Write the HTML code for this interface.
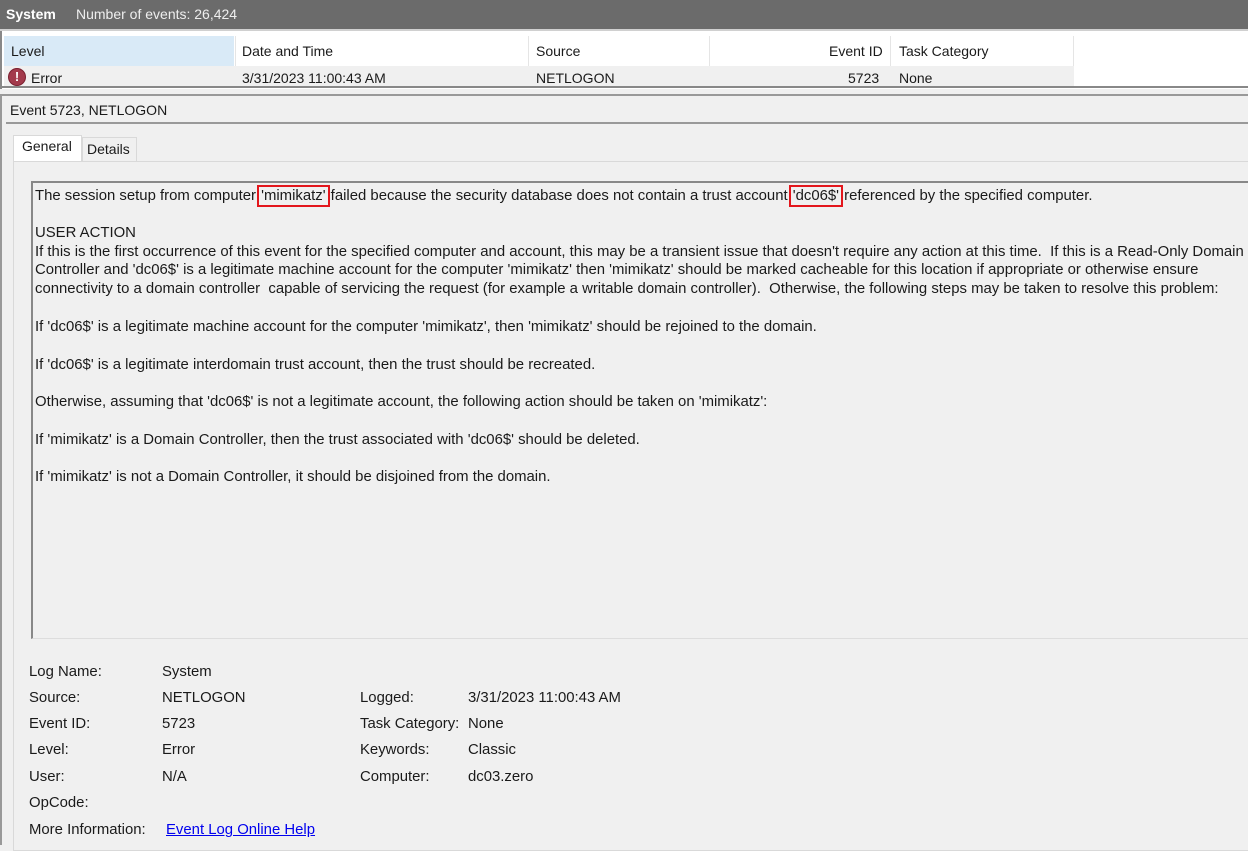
<!DOCTYPE html>
<html><head><meta charset="utf-8"><style>
*{margin:0;padding:0;box-sizing:border-box}
body{width:1248px;height:845px;background:#f0f0f0;font-family:"Liberation Sans",sans-serif;font-size:14px;color:#1a1a1a;position:relative;overflow:hidden}
.a{position:absolute;white-space:nowrap}
.m{font-size:14.9px;margin-top:2px}
.bx{outline:2px solid #e3161c;outline-offset:1px;padding:0 1px}
</style></head><body>
<div class="a" style="left:0;top:0;width:1248px;height:29px;background:#6b6b6b"></div>
<div class="a" style="left:6px;top:6px;color:#fff;font-weight:bold">System</div>
<div class="a" style="left:76px;top:6px;color:#eee">Number of events: 26,424</div>
<div class="a" style="left:0;top:29px;width:1248px;height:2px;background:#d0d0d0"></div>
<div class="a" style="left:0;top:31px;width:1248px;height:58px;background:#fff;border-left:2px solid #888"></div>
<div class="a" style="left:4px;top:36px;width:230px;height:30px;background:#d9eaf7"></div>
<div class="a" style="left:235px;top:36px;width:1px;height:30px;background:#e5e5e5"></div>
<div class="a" style="left:528px;top:36px;width:1px;height:30px;background:#e5e5e5"></div>
<div class="a" style="left:709px;top:36px;width:1px;height:30px;background:#e5e5e5"></div>
<div class="a" style="left:890px;top:36px;width:1px;height:30px;background:#e5e5e5"></div>
<div class="a" style="left:1073px;top:36px;width:1px;height:30px;background:#e5e5e5"></div>
<div class="a" style="left:4px;top:66px;width:1070px;height:20px;background:#f0f0f0"></div>
<div class="a" style="left:11px;top:43px">Level</div>
<div class="a" style="left:242px;top:43px">Date and Time</div>
<div class="a" style="left:536px;top:43px">Source</div>
<div class="a" style="left:829px;top:43px">Event ID</div>
<div class="a" style="left:899px;top:43px">Task Category</div>
<div class="a" style="left:8px;top:68px;width:18px;height:18px;border-radius:50%;background:#a33a4c;border:1px solid #7a2030;color:#fff;font-weight:bold;font-size:13px;text-align:center;line-height:16px">!</div>
<div class="a" style="left:31px;top:70px">Error</div>
<div class="a" style="left:242px;top:70px">3/31/2023 11:00:43 AM</div>
<div class="a" style="left:536px;top:70px">NETLOGON</div>
<div class="a" style="left:848px;top:70px">5723</div>
<div class="a" style="left:899px;top:70px">None</div>
<div class="a" style="left:0;top:86px;width:1248px;height:2px;background:#888"></div>
<div class="a" style="left:0;top:94px;width:1248px;height:2px;background:#999"></div>
<div class="a" style="left:0;top:94px;width:2px;height:751px;background:#999"></div>
<div class="a" style="left:10px;top:102px">Event 5723, NETLOGON</div>
<div class="a" style="left:6px;top:122px;width:1242px;height:2px;background:#999"></div>
<div class="a" style="left:13px;top:135px;width:69px;height:27px;background:#fff;border:1px solid #d9d9d9;border-bottom:none"></div>
<div class="a" style="left:22px;top:138px">General</div>
<div class="a" style="left:82px;top:137px;width:55px;height:24px;background:#f0f0f0;border:1px solid #d9d9d9;border-bottom:none"></div>
<div class="a" style="left:87px;top:141px">Details</div>
<div class="a" style="left:13px;top:161px;width:1240px;height:690px;border:1px solid #d9d9d9;border-right:none"></div>
<div class="a" style="left:31px;top:181px;width:1220px;height:458px;border-top:2px solid #888;border-left:2px solid #888;border-bottom:1px solid #ddd"></div>
<div class="a m" style="left:35px;top:186px">The session setup from computer <span class="bx">'mimikatz'</span> failed because the security database does not contain a trust account <span class="bx">'dc06$'</span> referenced by the specified computer.</div>
<div class="a m" style="left:35px;top:223px">USER ACTION</div>
<div class="a m" style="left:35px;top:242px">If this is the first occurrence of this event for the specified computer and account, this may be a transient issue that doesn't require any action at this time.&nbsp; If this is a Read-Only Domain</div>
<div class="a m" style="left:35px;top:260px">Controller and 'dc06$' is a legitimate machine account for the computer 'mimikatz' then 'mimikatz' should be marked cacheable for this location if appropriate or otherwise ensure</div>
<div class="a m" style="left:35px;top:279px">connectivity to a domain controller&nbsp; capable of servicing the request (for example a writable domain controller).&nbsp; Otherwise, the following steps may be taken to resolve this problem:</div>
<div class="a m" style="left:35px;top:317px">If 'dc06$' is a legitimate machine account for the computer 'mimikatz', then 'mimikatz' should be rejoined to the domain.</div>
<div class="a m" style="left:35px;top:355px">If 'dc06$' is a legitimate interdomain trust account, then the trust should be recreated.</div>
<div class="a m" style="left:35px;top:392px">Otherwise, assuming that 'dc06$' is not a legitimate account, the following action should be taken on 'mimikatz':</div>
<div class="a m" style="left:35px;top:430px">If 'mimikatz' is a Domain Controller, then the trust associated with 'dc06$' should be deleted.</div>
<div class="a m" style="left:35px;top:467px">If 'mimikatz' is not a Domain Controller, it should be disjoined from the domain.</div>
<div class="a m" style="left:29px;top:662px">Log Name:</div><div class="a m" style="left:162px;top:662px">System</div>
<div class="a m" style="left:29px;top:688px">Source:</div><div class="a m" style="left:162px;top:688px">NETLOGON</div>
<div class="a m" style="left:360px;top:688px">Logged:</div><div class="a m" style="left:468px;top:688px">3/31/2023 11:00:43 AM</div>
<div class="a m" style="left:29px;top:714px">Event ID:</div><div class="a m" style="left:162px;top:714px">5723</div>
<div class="a m" style="left:360px;top:714px">Task Category:</div><div class="a m" style="left:468px;top:714px">None</div>
<div class="a m" style="left:29px;top:740px">Level:</div><div class="a m" style="left:162px;top:740px">Error</div>
<div class="a m" style="left:360px;top:740px">Keywords:</div><div class="a m" style="left:468px;top:740px">Classic</div>
<div class="a m" style="left:29px;top:767px">User:</div><div class="a m" style="left:162px;top:767px">N/A</div>
<div class="a m" style="left:360px;top:767px">Computer:</div><div class="a m" style="left:468px;top:767px">dc03.zero</div>
<div class="a m" style="left:29px;top:793px">OpCode:</div>
<div class="a m" style="left:29px;top:820px">More Information:</div>
<div class="a m" style="left:166px;top:820px;color:#0000ee;text-decoration:underline">Event Log Online Help</div>
</body></html>
